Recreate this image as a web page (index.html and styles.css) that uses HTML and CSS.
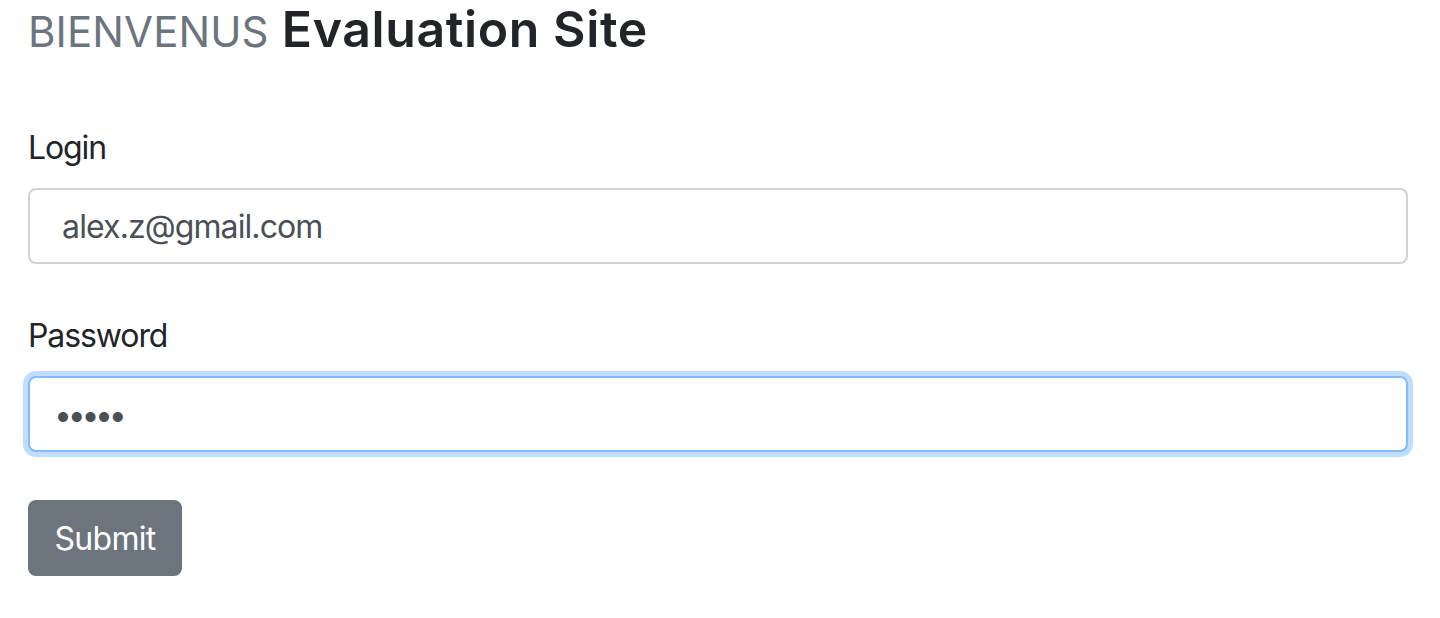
FILE: index.html
```html
<!DOCTYPE html>
<html lang="en">
<head>
<meta charset="utf-8">
<title>Evaluation Site</title>
<link rel="stylesheet" href="styles.css">
</head>
<body>
<main class="page">
  <h1 class="title"><span class="title-muted">BIENVENUS</span> Evaluation Site</h1>
  <form class="form">
    <div class="form-group">
      <label class="label" for="login">Login</label>
      <input class="input" id="login" type="text" value=" alex.z@gmail.com">
    </div>
    <div class="form-group">
      <label class="label" for="password">Password</label>
      <input class="input input-password input-focus" id="password" type="password" value="12345">
    </div>
    <div class="actions">
      <button class="btn" type="button">Submit</button>
    </div>
  </form>
</main>
</body>
</html>
```
FILE: styles.css
```css
* { box-sizing: border-box; }
html, body { margin: 0; padding: 0; background: #fff; }
body {
  font-family: Inter, "Noto Sans", sans-serif;
  color: #212529;
}
.page {
  padding: 0 32px 0 28px;
}
.title {
  margin: 0 0 63px 0;
  font-size: 50px;
  line-height: 58px;
  font-weight: 600;
  color: #212529;
  letter-spacing: 0.6px;
}
.title-muted {
  font-size: 42px;
  font-weight: 400;
  color: #6c757d;
  letter-spacing: 0.1px;
}
.form {
  display: flex;
  flex-direction: column;
  gap: 48px;
}
.form-group {
  display: flex;
  flex-direction: column;
  gap: 16px;
}
.label {
  font-size: 32px;
  line-height: 48px;
  color: #212529;
  letter-spacing: -1.1px;
}
.input {
  display: block;
  width: 100%;
  height: 76px;
  padding: 0 24px 0 24px;
  font-family: Inter, "Noto Sans", sans-serif;
  font-size: 32px;
  letter-spacing: -0.9px;
  color: #495057;
  background: #fff;
  border: 2px solid #ced4da;
  border-radius: 8px;
  outline: none;
}
.input-password {
  letter-spacing: -4.3px;
}
.input-focus {
  border-color: #80bdff;
  box-shadow: 0 0 0 5px rgba(0, 123, 255, 0.25);
}
.actions { display: flex; }
.btn {
  height: 76px;
  width: 154px;
  padding: 0;
  font-family: Inter, "Noto Sans", sans-serif;
  font-size: 32px;
  letter-spacing: -0.7px;
  color: #fff;
  background: #6c757d;
  border: 2px solid #6c757d;
  border-radius: 8px;
}
```
